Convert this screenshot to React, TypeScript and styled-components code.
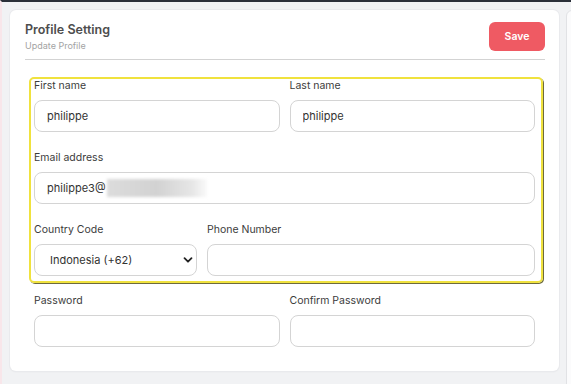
import React from 'react';
import styled, { createGlobalStyle } from 'styled-components';

const GlobalStyle = createGlobalStyle`
  * { box-sizing: border-box; }
  html, body { margin: 0; padding: 0; }
  body {
    background: #f1f2f4;
    font-family: 'Inter', 'Noto Sans', sans-serif;
    overflow: hidden;
  }
`;

function Field({ label, value, children }: any) {
  return (
    <FieldBox>
      <Label>{label}</Label>
      {children ?? <Input defaultValue={value} />}
    </FieldBox>
  );
}

export default function App() {
  return (
    <>
      <GlobalStyle />
      <Page>
        <Card>
          <Header>
            <div>
              <Title>Profile Setting</Title>
              <Subtitle>Update Profile</Subtitle>
            </div>
            <SaveButton>Save</SaveButton>
          </Header>
          <Divider />
          <Form>
            <Highlight>
              <Row>
                <Field label='First name' value='philippe' />
                <Field label='Last name' value='philippe' />
              </Row>
              <Row $single>
                <Field label='Email address'>
                  <FakeInput>
                    philippe3@
                    <Blurred />
                  </FakeInput>
                </Field>
              </Row>
              <Row $cols='163px 1fr'>
                <Field label='Country Code'>
                  <SelectWrap>
                    <Select defaultValue='id'>
                      <option value='id'>Indonesia (+62)</option>
                    </Select>
                    <Chevron width='10' height='10' viewBox='0 0 10 10'>
                      <path d='M1.5 3.2 L5 6.7 L8.5 3.2' fill='none' stroke='#222' strokeWidth='1.8' strokeLinecap='round' strokeLinejoin='round' />
                    </Chevron>
                  </SelectWrap>
                </Field>
                <Field label='Phone Number' value='' />
              </Row>
            </Highlight>
            <Row>
              <Field label='Password' value='' />
              <Field label='Confirm Password' value='' />
            </Row>
          </Form>
        </Card>
        <SidePanel />
      </Page>
    </>
  );
}

const Page = styled.div`
  display: flex;
  align-items: flex-start;
  gap: 7px;
  height: 384px;
  border-top: 2px solid #2b3039;
  border-left: 2px solid #f8e6ea;
  padding: 8px 0 0 8px;
`;
const Card = styled.div`
  width: 549px;
  flex-shrink: 0;
  background: #fff;
  border-radius: 6px;
  box-shadow: 0 0 0 1px #e9eaed, 0 1px 2px rgba(0, 0, 0, 0.06);
  padding: 12px 14px 24px 15px;
`;
const SidePanel = styled.div`
  width: 30px;
  height: 380px;
  flex-shrink: 0;
  background: #fbfbfc;
  border: 1px solid #e1e2e5;
  border-radius: 6px;
`;
const Header = styled.div`
  display: flex;
  justify-content: space-between;
  align-items: flex-start;
`;
const Title = styled.div`
  font-size: 12.5px;
  font-weight: 600;
  color: #4d4d4d;
  line-height: 16px;
`;
const Subtitle = styled.div`
  font-size: 9px;
  color: #a3a3a3;
  line-height: 14px;
  margin-top: 1px;
`;
const SaveButton = styled.button`
  width: 56px;
  height: 29px;
  border: none;
  border-radius: 6px;
  background: #ef5a63;
  color: #fff;
  font-family: inherit;
  font-size: 10.5px;
  font-weight: 600;
  cursor: pointer;
`;
const Divider = styled.div`
  height: 1px;
  background: #d3d3d3;
  margin-top: 6px;
`;
const Form = styled.div`
  padding: 17px 10px 0 9px;
`;
const Highlight = styled.div`
  margin: 0 -8px 11px -5px;
  padding: 0 6px 5px 3px;
  border: 2px solid #f0e23e;
  border-radius: 5px;
  box-shadow: 1px 1px 0 #6d6a3c;
`;
const Row = styled.div<{ $cols?: string; $single?: boolean }>`
  display: grid;
  grid-template-columns: ${(p) => (p.$single ? '1fr' : p.$cols ?? '1fr 1fr')};
  column-gap: 10px;
  margin-bottom: 19px;
  &:last-child {
    margin-bottom: 0;
  }
`;
const FieldBox = styled.div`
  display: flex;
  flex-direction: column;
  gap: 7px;
`;
const Label = styled.label`
  font-size: 10.5px;
  line-height: 14px;
  color: #3c3c3c;
`;
const Input = styled.input`
  height: 32px;
  width: 100%;
  border: 1px solid #d4d4d4;
  border-radius: 8px;
  padding: 0 12px;
  font-family: inherit;
  font-size: 11px;
  color: #333;
  outline: none;
`;
const FakeInput = styled.div`
  height: 32px;
  display: flex;
  align-items: center;
  border: 1px solid #d4d4d4;
  border-radius: 8px;
  padding: 0 12px;
  font-size: 11px;
  color: #333;
`;
const Blurred = styled.span`
  display: inline-block;
  width: 100px;
  height: 18px;
  margin-left: 1px;
  background: linear-gradient(90deg, #dcdcdc, #d2d2d2 50%, #e6e6e6 85%, #fafafa);
  filter: blur(1.5px);
`;
const SelectWrap = styled.div`
  position: relative;
`;
const Select = styled.select`
  appearance: none;
  width: 100%;
  height: 32px;
  border: 1px solid #d4d4d4;
  border-radius: 8px;
  padding: 0 26px 0 15px;
  background: #fff;
  font-family: inherit;
  font-size: 11px;
  color: #333;
  outline: none;
`;
const Chevron = styled.svg`
  position: absolute;
  right: 4px;
  top: 11px;
  pointer-events: none;
`;
